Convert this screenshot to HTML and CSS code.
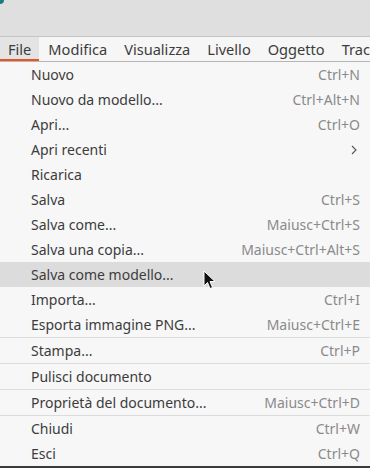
FILE: index.html
```html
<!doctype html>
<html lang="it">

<head>
    <meta charset="UTF-8">
    <meta name="viewport" content="width=device-width, initial-scale=1.0">
    <title>File</title>
    <link rel="stylesheet" href="styles.css">
</head>

<body>
    <div class="titlebar">
        <span class="corner"></span>
    </div>
    <div class="menubar">
        <span class="menubar-item active">File</span>
        <span class="menubar-item">Modifica</span>
        <span class="menubar-item">Visualizza</span>
        <span class="menubar-item">Livello</span>
        <span class="menubar-item">Oggetto</span>
        <span class="menubar-item">Tracciato</span>
    </div>
    <div class="menu">
        <div class="item"><span>Nuovo</span><span class="accel">Ctrl+N</span></div>
        <div class="item"><span>Nuovo da modello...</span><span class="accel">Ctrl+Alt+N</span></div>
        <div class="item"><span>Apri...</span><span class="accel">Ctrl+O</span></div>
        <div class="item"><span>Apri recenti</span><span class="arrow">
            <svg width="8" height="10" viewBox="0 0 8 10"><path d="M2 1 L6 5 L2 9" fill="none" stroke="#555" stroke-width="1.1"/></svg>
        </span></div>
        <div class="item"><span>Ricarica</span></div>
        <div class="item"><span>Salva</span><span class="accel">Ctrl+S</span></div>
        <div class="item"><span>Salva come...</span><span class="accel">Maiusc+Ctrl+S</span></div>
        <div class="item"><span>Salva una copia...</span><span class="accel">Maiusc+Ctrl+Alt+S</span></div>
        <div class="item hover"><span>Salva come modello...</span>
            <svg class="cursor" width="14" height="20" viewBox="0 0 14 20">
                <path d="M1 1 L1 16 L4.5 12.5 L7 18.5 L9.5 17.5 L7 11.5 L12 11.5 Z" fill="#111" stroke="#fff" stroke-width="1"/>
            </svg>
        </div>
        <div class="item"><span>Importa...</span><span class="accel">Ctrl+I</span></div>
        <div class="item"><span>Esporta immagine PNG...</span><span class="accel">Maiusc+Ctrl+E</span></div>
        <div class="separator"></div>
        <div class="item"><span>Stampa...</span><span class="accel">Ctrl+P</span></div>
        <div class="separator"></div>
        <div class="item"><span>Pulisci documento</span></div>
        <div class="separator"></div>
        <div class="item"><span>Proprietà del documento...</span><span class="accel">Maiusc+Ctrl+D</span></div>
        <div class="separator"></div>
        <div class="item"><span>Chiudi</span><span class="accel">Ctrl+W</span></div>
        <div class="item"><span>Esci</span><span class="accel">Ctrl+Q</span></div>
    </div>
    <div class="bottom-edge"></div>
</body>

</html>
```

FILE: styles.css
```css
body {
    margin: 0;
    padding: 0;
    width: 370px;
    height: 468px;
    overflow: hidden;
    background-color: #f7f7f7;
    font-family: 'Noto Sans', 'Open Sans', sans-serif;
    font-size: 14px;
    color: #3c3c3c;
}

.titlebar {
    height: 36px;
    background-color: #dfdfdf;
    border-bottom: 1px solid #c4c4c4;
    position: relative;
}

.corner {
    position: absolute;
    top: -4px;
    left: -4px;
    width: 8px;
    height: 8px;
    border-radius: 50%;
    background-color: #1f7a80;
}

.menubar {
    height: 24px;
    display: flex;
    white-space: nowrap;
    background-color: #f6f6f6;
    border-bottom: 1px solid #b6b6b6;
    overflow: hidden;
    font-size: 14.6px;
}

.menubar-item {
    padding: 0 8px;
    line-height: 24px;
    margin-right: 1px;
}

.menubar-item.active {
    background-color: #e4e4e4;
    box-shadow: inset 0 -2px 0 #e95420;
    padding: 0 8px;
}

.menu {
    display: flex;
    flex-direction: column;
}

.item {
    height: 25px;
    display: flex;
    align-items: center;
    justify-content: space-between;
    padding: 0 10px 0 31px;
    position: relative;
}

.item.hover {
    background-color: #dcdcdc;
}

.accel {
    color: #8a8a8a;
}

.arrow {
    display: flex;
    padding-right: 2px;
}

.separator {
    height: 1px;
    background-color: #dcdcdc;
}

.cursor {
    position: absolute;
    left: 203px;
    top: 8px;
}

.bottom-edge {
    height: 2px;
    background-color: #3a3a3a;
}
```
